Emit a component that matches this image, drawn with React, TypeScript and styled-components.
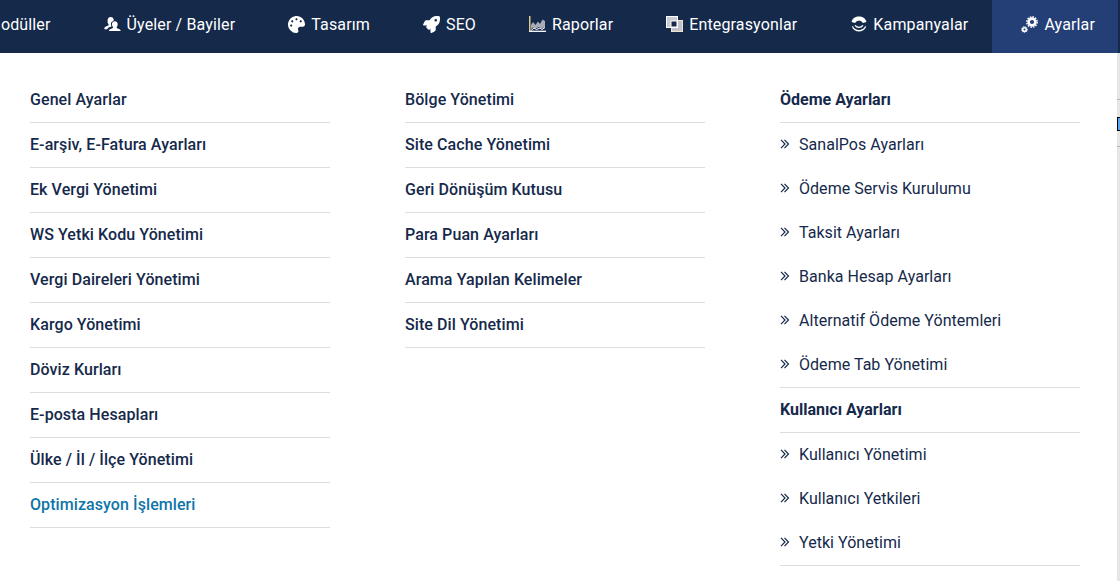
import React from 'react';
import styled, { createGlobalStyle } from 'styled-components';
import { FaPalette, FaRocket } from 'react-icons/fa';

const GlobalStyle = createGlobalStyle`
  html, body {
    margin: 0;
    padding: 0;
    background: #fff;
  }
  body {
    font-family: Roboto, "Liberation Sans", sans-serif;
  }
`;

const MembersIcon = () => (
  <svg width="17" height="16" viewBox="0 0 18 16" fill="#fff">
    <path d="M7 0.500c2 0 3.200 1.300 3.200 3 0 .5-.1 1-.3 1.400-1.600.3-2.600 1.600-2.600 3.200 0 .8.3 1.600.7 2.200-.9.6-2.600 1-3.400 1.600-.6.400-1 1-1.100 1.600H0.300c0-1.500.8-2.400 2.200-3 1-.4 2-.7 2.400-1.200.1-.4 0-.8-.3-1.200-.6-.8-.9-1.900-.9-3.200C3.700 2.100 5 .5 7 .5z" />
    <path d="M11.500 5c1.800 0 3 1.400 3 3.300 0 1.200-.4 2.200-1 3-.2.4-.2.8 0 1 .5.4 1.400.6 2.300 1 1 .4 1.800 1.100 1.900 2.200H5.200c.1-1.100.9-1.800 1.900-2.200.9-.4 1.800-.6 2.300-1 .2-.3.2-.6 0-1-.6-.8-1-1.800-1-3C8.400 6.400 9.700 5 11.500 5z" />
  </svg>
);

const ChartIcon = () => (
  <svg width="17" height="16" viewBox="0 0 17 16">
    <path d="M2 9l2-3 2.500 3L9 5.500l2 2.500 2.500-4.500L16 5v6l-3 1.500-3-1.500-3 1.500L4 11.500 2 13z" fill="#a7acb7" />
    <path d="M2 14.500L5 12l2.500 1.500L11 12l2 1.500 3-2" fill="none" stroke="#fff" strokeWidth="1" />
    <path d="M.75 0v15" fill="none" stroke="#e6c98a" strokeWidth="1.500" />
    <path d="M0 15.300H17" fill="none" stroke="#fff" strokeWidth="1.300" />
  </svg>
);

const CopyIcon = () => (
  <svg width="17" height="16" viewBox="0 0 17 16">
    <rect x="5.500" y="4.500" width="11" height="11" fill="#bfc3cb" stroke="#f2e4c8" strokeWidth="1" />
    <rect x="0.500" y="0.500" width="11" height="11" fill="#c9ccd3" stroke="#fff" strokeWidth="1" />
    <rect x="5" y="5" width="6" height="6" fill="#15294b" stroke="#fff" strokeWidth="1" />
  </svg>
);

const CampaignIcon = () => (
  <svg width="17" height="16" viewBox="-1 0 17 16" fill="#fff">
    <path d="M0.500 6C1.500 2.200 4.500 0.500 8 0.500S14.500 2.200 15.500 6L11.800 7C11 5.400 9.600 4.800 8 4.800S5 5.400 4.200 7z" />
    <path d="M0.800 10.500C2 14 5 15.500 8 15.500s6-1.500 7.200-5L14 10.200C13 12.800 10.500 14 8 14s-5-1.200-6-3.800z" />
    <path d="M3.500 9.500C4.500 11.200 6.200 12 8 12s3.500-.8 4.500-2.500l-1.200-.4C10.500 10.200 9.300 10.700 8 10.700s-2.500-.5-3.300-1.600z" />
  </svg>
);

const GearsIcon = () => (
  <svg width="17" height="17" viewBox="0 0 17 17" fill="none" stroke="#fff">
    <circle cx="11" cy="6" r="3.400" strokeWidth="2.600" />
    <circle cx="11" cy="6" r="5.200" strokeWidth="1.400" strokeDasharray="1.600 1.100" />
    <circle cx="3.500" cy="13.500" r="1.800" strokeWidth="1.600" />
    <circle cx="3.500" cy="13.500" r="3" strokeWidth="1" strokeDasharray="1 1" />
  </svg>
);

const DoubleChevron = () => (
  <svg width="10" height="10" viewBox="0 0 10 10" fill="none" stroke="#15294b" strokeWidth="1.200">
    <path d="M1 .8L5 5 1 9.200" />
    <path d="M4.500 .8L8.500 5 4.500 9.200" />
  </svg>
);

const navItems = [
  { label: 'Modüller', icon: null },
  { label: 'Üyeler / Bayiler', icon: <MembersIcon /> },
  { label: 'Tasarım', icon: <FaPalette size={17} /> },
  { label: 'SEO', icon: <FaRocket size={17} /> },
  { label: 'Raporlar', icon: <ChartIcon /> },
  { label: 'Entegrasyonlar', icon: <CopyIcon /> },
  { label: 'Kampanyalar', icon: <CampaignIcon /> },
  { label: 'Ayarlar', icon: <GearsIcon />, active: true },
];

const firstColumn = [
  'Genel Ayarlar',
  'E-arşiv, E-Fatura Ayarları',
  'Ek Vergi Yönetimi',
  'WS Yetki Kodu Yönetimi',
  'Vergi Daireleri Yönetimi',
  'Kargo Yönetimi',
  'Döviz Kurları',
  'E-posta Hesapları',
  'Ülke / İl / İlçe Yönetimi',
  'Optimizasyon İşlemleri',
];

const secondColumn = [
  'Bölge Yönetimi',
  'Site Cache Yönetimi',
  'Geri Dönüşüm Kutusu',
  'Para Puan Ayarları',
  'Arama Yapılan Kelimeler',
  'Site Dil Yönetimi',
];

const groups = [
  {
    title: 'Ödeme Ayarları',
    items: [
      'SanalPos Ayarları',
      'Ödeme Servis Kurulumu',
      'Taksit Ayarları',
      'Banka Hesap Ayarları',
      'Alternatif Ödeme Yöntemleri',
      'Ödeme Tab Yönetimi',
    ],
  },
  {
    title: 'Kullanıcı Ayarları',
    items: ['Kullanıcı Yönetimi', 'Kullanıcı Yetkileri', 'Yetki Yönetimi'],
  },
];

const App = () => {
  return (
    <Page>
      <GlobalStyle />
      <NavBar>
        {navItems.map((item) => (
          <NavItem key={item.label} $active={item.active}>
            {item.icon}
            <span>{item.label}</span>
          </NavItem>
        ))}
      </NavBar>
      <Body>
        <MegaMenu>
          <Column>
            {firstColumn.map((label) => (
              <MenuLink key={label} $highlight={label === 'Optimizasyon İşlemleri'}>
                {label}
              </MenuLink>
            ))}
          </Column>
          <Column>
            {secondColumn.map((label) => (
              <MenuLink key={label}>{label}</MenuLink>
            ))}
          </Column>
          <Column>
            {groups.map((group) => (
              <div key={group.title}>
                <GroupTitle>{group.title}</GroupTitle>
                <SubList>
                  {group.items.map((label) => (
                    <SubLink key={label}>
                      <DoubleChevron />
                      {label}
                    </SubLink>
                  ))}
                </SubList>
              </div>
            ))}
          </Column>
        </MegaMenu>
        <SideStrip>
          <StripMark />
        </SideStrip>
      </Body>
    </Page>
  );
};

const Page = styled.div`
  width: 1120px;
  height: 581px;
  overflow: hidden;
  background: #fff;
`;

const NavBar = styled.nav`
  display: flex;
  justify-content: flex-end;
  height: 53px;
  padding-right: 2px;
  overflow: hidden;
  background: #15294b;
`;

const NavItem = styled.div<{ $active?: boolean }>`
  display: flex;
  flex: none;
  align-items: center;
  gap: 6px;
  padding: 0 ${({ $active }) => ($active ? '23px' : '24px')} 5px 29px;
  color: #fff;
  font-size: 16px;
  letter-spacing: 0.14px;
  white-space: nowrap;
  background: ${({ $active }) => ($active ? '#243f76' : 'transparent')};
`;

const Body = styled.div`
  display: flex;
  height: 528px;
`;

const MegaMenu = styled.div`
  display: grid;
  flex: 1;
  grid-template-columns: repeat(3, 300px);
  column-gap: 75px;
  align-content: start;
  padding: 25px 0 0 30px;
`;

const Column = styled.div`
  display: flex;
  flex-direction: column;
`;

const MenuLink = styled.div<{ $highlight?: boolean }>`
  box-sizing: border-box;
  height: 45px;
  padding-top: 12px;
  border-bottom: 1px solid #dddddd;
  color: ${({ $highlight }) => ($highlight ? '#0f75a8' : '#15294b')};
  font-size: 16px;
  font-weight: 500;
  line-height: 19px;
  letter-spacing: 0.08px;
`;

const GroupTitle = styled(MenuLink)`
  font-weight: 700;
  letter-spacing: 0;
`;

const SubList = styled.div`
  display: flex;
  flex-direction: column;
  border-bottom: 1px solid #dddddd;
`;

const SubLink = styled.div`
  box-sizing: border-box;
  display: flex;
  align-items: center;
  gap: 9px;
  height: 44px;
  padding-bottom: 2px;
  color: #15294b;
  font-size: 16px;
  line-height: 19px;
  letter-spacing: 0.04px;
`;

const SideStrip = styled.div`
  display: flex;
  flex: none;
  flex-direction: column;
  justify-content: flex-start;
  width: 3px;
  padding-top: 46px;
  background: #e6e6e6;
`;

const StripMark = styled.div`
  box-sizing: border-box;
  height: 48px;
  border-top: 1px solid #b5b5b5;
  border-bottom: 1px solid #b5b5b5;
  &::before {
    content: '';
    display: block;
    height: 12px;
    margin-top: 17px;
    border-left: 1px solid #000;
    border-top: 1px solid #000;
    border-bottom: 1px solid #000;
    background: #5aa9f0;
  }
`;

export default App;
